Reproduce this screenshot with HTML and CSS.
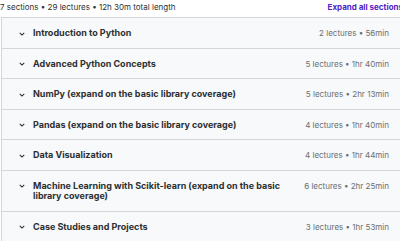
FILE: index.html
```html
<!DOCTYPE html>
<html lang="en">
<head>
    <meta charset="UTF-8">
    <meta name="viewport" content="width=device-width, initial-scale=1.0">
    <title>Course content</title>
    <link rel="stylesheet" href="styles.css">
</head>
<body>
    <div class="curriculum">
        <div class="summary">
            <span>7 sections • 29 lectures • 12h 30m total length</span>
            <button class="expand-all">Expand all sections</button>
        </div>

        <div class="panel">
            <div class="section">
                <svg class="chevron" viewBox="0 0 8 5"><path d="M1 1l3 3 3-3" /></svg>
                <span class="title">Introduction to Python</span>
                <span class="meta">2 lectures • 56min</span>
            </div>
            <div class="section">
                <svg class="chevron" viewBox="0 0 8 5"><path d="M1 1l3 3 3-3" /></svg>
                <span class="title">Advanced Python Concepts</span>
                <span class="meta">5 lectures • 1hr 40min</span>
            </div>
            <div class="section">
                <svg class="chevron" viewBox="0 0 8 5"><path d="M1 1l3 3 3-3" /></svg>
                <span class="title">NumPy (expand on the basic library coverage)</span>
                <span class="meta">5 lectures • 2hr 13min</span>
            </div>
            <div class="section">
                <svg class="chevron" viewBox="0 0 8 5"><path d="M1 1l3 3 3-3" /></svg>
                <span class="title">Pandas (expand on the basic library coverage)</span>
                <span class="meta">4 lectures • 1hr 40min</span>
            </div>
            <div class="section">
                <svg class="chevron" viewBox="0 0 8 5"><path d="M1 1l3 3 3-3" /></svg>
                <span class="title">Data Visualization</span>
                <span class="meta">4 lectures • 1hr 44min</span>
            </div>
            <div class="section">
                <svg class="chevron" viewBox="0 0 8 5"><path d="M1 1l3 3 3-3" /></svg>
                <span class="title">Machine Learning with Scikit-learn (expand on the basic library coverage)</span>
                <span class="meta">6 lectures • 2hr 25min</span>
            </div>
            <div class="section">
                <svg class="chevron" viewBox="0 0 8 5"><path d="M1 1l3 3 3-3" /></svg>
                <span class="title">Case Studies and Projects</span>
                <span class="meta">3 lectures • 1hr 53min</span>
            </div>
        </div>
    </div>
</body>
</html>
```

FILE: styles.css
```css
body {
    margin: 0;
    overflow: hidden;
    font-family: Inter, "Noto Sans", sans-serif;
    color: #2d2f31;
    background-color: #ffffff;
}
.curriculum {
    width: 410px;
    padding-left: 1px;
}
.summary {
    display: flex;
    justify-content: space-between;
    align-items: center;
    height: 13px;
    margin-left: -1px;
    margin-bottom: 4px;
    padding-right: 8px;
    font-size: 8px;
    color: #2d2f31;
}
.expand-all {
    background: none;
    border: none;
    padding: 0;
    font-family: inherit;
    font-size: 8px;
    font-weight: bold;
    color: #5022c3;
    cursor: pointer;
}
.panel {
    border: 1px solid #d1d7dc;
    border-right: none;
}
.section {
    display: flex;
    align-items: flex-start;
    gap: 8px;
    padding: 10px 22px 9px 17px;
    background-color: #f7f9fa;
    border-bottom: 1px solid #d1d7dc;
}
.section:last-child {
    border-bottom: none;
}
.chevron {
    width: 6px;
    height: 4px;
    margin-top: 3.5px;
    flex-shrink: 0;
    fill: none;
    stroke: #2d2f31;
    stroke-width: 1.4;
}
.title {
    flex: 1;
    font-size: 9px;
    font-weight: bold;
    line-height: 10.5px;
}
.meta {
    margin-left: 12px;
    font-size: 8px;
    line-height: 10.5px;
    color: #6a6f73;
    white-space: nowrap;
}
```
